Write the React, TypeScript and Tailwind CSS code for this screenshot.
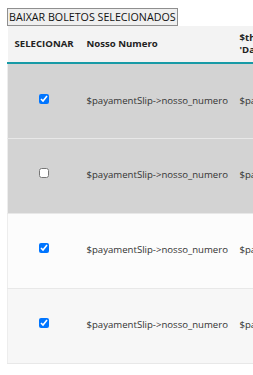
import React from "react";

const rows = [
  { checked: true, bg: "bg-[#d3d3d3]" },
  { checked: false, bg: "bg-[#d3d3d3]" },
  { checked: true, bg: "bg-[#fcfcfc]" },
  { checked: true, bg: "bg-[#f7f7f7]" },
];

export default function App() {
  return (
    <div
      className="w-[253px] h-[375px] overflow-hidden bg-white pl-[7px] pt-[8px] text-[#333]"
      style={{ fontFamily: '"Open Sans", "Liberation Sans", sans-serif' }}
    >
      <button className="block border border-[#8f8f8f] bg-[#efefef] px-[1px] h-[18px] text-[10.7px] leading-[15px] text-[#111] whitespace-nowrap">
        BAIXAR BOLETOS SELECIONADOS
      </button>
      <table className="border-collapse text-[9.6px] w-[440px] table-fixed">
        <colgroup>
          <col className="w-[72px]" />
          <col className="w-[153px]" />
          <col className="w-[215px]" />
        </colgroup>
        <thead>
          <tr className="bg-[#f3f3f3] border-b-2 border-[#179aa6] h-[37px]">
            <th className="px-[7px] text-left font-bold text-[#222] align-middle">SELECIONAR</th>
            <th className="px-[7px] text-left font-bold text-[#222] align-middle">Nosso Numero</th>
            <th className="px-[7px] text-left font-bold text-[#222] align-middle leading-[12px]">
              $this-&gt;translate-&gt;get(
              <br />
              'Data Vencimento')
            </th>
          </tr>
        </thead>
        <tbody>
          {rows.map((r, i) => (
            <tr key={i} className={`${r.bg} border-b border-[#e8e8e8] border-l border-l-[#ededed] h-[75px]`}>
              <td className="px-[7px] text-center align-middle">
                <input
                  type="checkbox"
                  defaultChecked={r.checked}
                  className="w-[10px] h-[10px] m-0 align-baseline"
                />
              </td>
              <td className="px-[7px] align-middle whitespace-nowrap">$payamentSlip-&gt;nosso_numero</td>
              <td className="px-[7px] align-middle whitespace-nowrap">$payamentSlip-&gt;vencimento</td>
            </tr>
          ))}
        </tbody>
      </table>
    </div>
  );
}
